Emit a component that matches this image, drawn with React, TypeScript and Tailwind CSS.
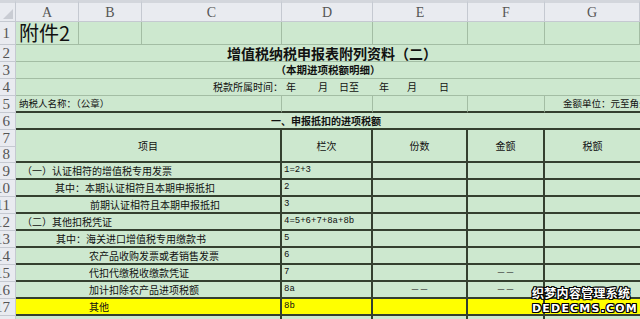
const cjk = "font-['Noto_Sans_CJK_SC',sans-serif]"
const light = 'border-[#a3bda4]'
const dark = 'border-[#34402f]'
const green = 'bg-[#cde8cf]'

function RowHead({ n }: { n: number }) {
  return (
    <div className="flex items-center justify-end overflow-hidden border-r border-b border-[#c5c9d1] bg-[#e9ebf0] pr-[5px] font-['Liberation_Serif',serif] text-[15px] leading-none text-[#555]">
      <span className="whitespace-nowrap">{n}</span>
    </div>
  )
}

const items = [
  { text: '（一）认证相符的增值税专用发票', pad: 'pl-[6px]', code: '1=2+3' },
  { text: '其中：本期认证相符且本期申报抵扣', pad: 'pl-[39px]', code: '2' },
  { text: '前期认证相符且本期申报抵扣', pad: 'pl-[74px]', code: '3' },
  { text: '（二）其他扣税凭证', pad: 'pl-[6px]', code: '4=5+6+7+8a+8b' },
  { text: '其中：海关进口增值税专用缴款书', pad: 'pl-[40px]', code: '5' },
  { text: '农产品收购发票或者销售发票', pad: 'pl-[73px]', code: '6' },
  { text: '代扣代缴税收缴款凭证', pad: 'pl-[73px]', code: '7', f: '－－' },
  { text: '加计扣除农产品进项税额', pad: 'pl-[73px]', code: '8a', e: '－－', f: '－－' },
  { text: '其他', pad: 'pl-[73px]', code: '8b', yellow: true },
  { text: '（三）本期用于购建不动产的扣税凭证', pad: 'pl-[30px]', code: '9' },
]

export default function App() {
  return (
    <div className={`relative h-[319px] w-[640px] overflow-hidden bg-white text-[#111] ${cjk}`}>
      <div className="grid grid-cols-[16px_63px_63px_140px_91px_95px_77px_95px] grid-rows-[22px_23px_17px_17px_17px_17px_17px_17px_16px_17px_17px_17px_17px_17px_17px_17px_17px_17px_17px]">
        {/* column header */}
        <div className="relative border-t-[3px] border-r border-b border-[#c5c9d1] border-t-[#d3d6dc] bg-[#e9ebf0]">
          <svg className="absolute right-[2px] bottom-[2px]" width="10" height="10" viewBox="0 0 10 10">
            <path d="M10 0 L10 10 L0 10 Z" fill="#c9ccd3" />
          </svg>
        </div>
        {['A', 'B', 'C', 'D', 'E', 'F', 'G'].map(c => (
          <div
            key={c}
            className="flex items-center justify-center border-t-[3px] border-r border-b border-[#c5c9d1] border-t-[#d3d6dc] bg-[#e9ebf0] font-['Liberation_Serif',serif] text-[14px] text-[#555]"
          >
            {c}
          </div>
        ))}

        {/* row 1 */}
        <RowHead n={1} />
        <div className={`flex items-center border-r border-b ${light} ${green} pl-[3px] text-[20px] leading-none`}>附件2</div>
        {[0, 1, 2, 3, 4, 5].map(i => (
          <div key={i} className={`border-r border-b ${light} ${green}`} />
        ))}

        {/* row 2 */}
        <RowHead n={2} />
        <div className={`col-span-7 flex items-center justify-center border-b ${light} ${green} pl-[8px] text-[14px] leading-none font-bold`}>
          增值税纳税申报表附列资料（二）
        </div>

        {/* row 3 */}
        <RowHead n={3} />
        <div className={`col-span-7 flex items-center justify-center border-b ${light} ${green} text-[10.5px] leading-none font-bold`}>
          （本期进项税额明细）
        </div>

        {/* row 4 */}
        <RowHead n={4} />
        <div className={`col-span-7 flex items-center border-b ${light} ${green} pl-[197px] text-[10px] leading-none whitespace-nowrap`}>
          <span>税款所属时间：</span>
          <span className="ml-[3px]">年</span>
          <span className="ml-[22px]">月</span>
          <span className="ml-[11px]">日至</span>
          <span className="ml-[20px]">年</span>
          <span className="ml-[18px]">月</span>
          <span className="ml-[22px]">日</span>
        </div>

        {/* row 5 */}
        <RowHead n={5} />
        <div className={`col-span-3 flex items-center border-r border-b-2 ${light} border-b-[#34402f] ${green} pl-[3px] text-[9.5px] leading-none`}>
          纳税人名称：（公章）
        </div>
        <div className={`border-r border-b-2 ${light} border-b-[#34402f] ${green}`} />
        <div className={`border-r border-b-2 ${light} border-b-[#34402f] ${green}`} />
        <div className={`border-r border-b-2 ${light} border-b-[#34402f] ${green}`} />
        <div className={`flex items-center overflow-hidden border-b-2 ${dark} ${green} pl-[18px] text-[9.5px] leading-none whitespace-nowrap`}>
          金额单位：元至角分
        </div>

        {/* row 6 */}
        <RowHead n={6} />
        <div className={`col-span-7 flex items-center justify-center border-b-2 ${dark} ${green} pr-[4px] text-[10px] leading-none font-bold`}>
          一、申报抵扣的进项税额
        </div>

        {/* rows 7-8 */}
        <RowHead n={7} />
        <div className={`col-span-3 row-span-2 flex items-center justify-center border-r-2 border-b-2 ${dark} ${green} text-[10px]`}>项目</div>
        <div className={`row-span-2 flex items-center justify-center border-r-2 border-b-2 ${dark} ${green} text-[10px]`}>栏次</div>
        <div className={`row-span-2 flex items-center justify-center border-r-2 border-b-2 ${dark} ${green} text-[10px]`}>份数</div>
        <div className={`row-span-2 flex items-center justify-center border-r-2 border-b-2 ${dark} ${green} text-[10px]`}>金额</div>
        <div className={`row-span-2 flex items-center justify-center border-b-2 ${dark} ${green} text-[10px]`}>税额</div>
        <RowHead n={8} />

        {/* rows 9-18 */}
        {items.map((it, i) => {
          const bg = it.yellow ? 'bg-[#ffff00]' : green
          return [
            <RowHead key={`h${i}`} n={9 + i} />,
            <div key={`a${i}`} className={`col-span-3 flex items-center border-r-2 border-b-2 ${dark} ${bg} ${it.pad} text-[10px] leading-none whitespace-nowrap`}>
              {it.text}
            </div>,
            <div key={`d${i}`} className={`flex items-center border-r-2 border-b-2 ${dark} ${bg} pl-[2px] font-['Liberation_Mono',monospace] text-[9px] leading-none`}>
              {it.code}
            </div>,
            <div key={`e${i}`} className={`flex items-center justify-center border-r-2 border-b-2 ${dark} ${bg} text-[9px] leading-none text-[#333]`}>
              {it.e}
            </div>,
            <div key={`f${i}`} className={`flex items-center justify-center border-r-2 border-b-2 ${dark} ${bg} text-[9px] leading-none text-[#333]`}>
              {it.f}
            </div>,
            <div key={`g${i}`} className={`border-b-2 ${dark} ${bg}`} />,
          ]
        })}
      </div>

      {/* watermark */}
      <div className="absolute top-[285px] left-[532px] w-[100px] font-bold text-white [text-shadow:1px_0_0_#000,-1px_0_0_#000,0_1px_0_#000,0_-1px_0_#000,1px_1px_0_#000,-1px_-1px_0_#000,1px_-1px_0_#000,-1px_1px_0_#000]">
        <div className="text-[12px] leading-[16px] tracking-[0.3px] whitespace-nowrap">织梦内容管理系统</div>
        <div className="font-['DejaVu_Sans',sans-serif] text-[11px] leading-[15px] tracking-[1.2px] whitespace-nowrap">DEDECMS.COM</div>
      </div>
    </div>
  )
}
